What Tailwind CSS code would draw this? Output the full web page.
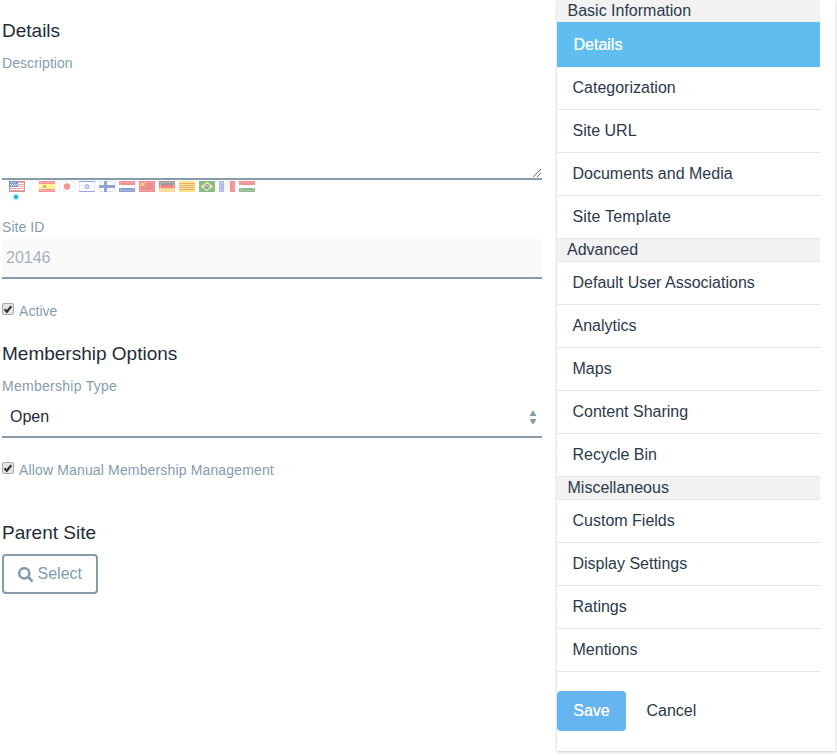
<!DOCTYPE html>
<html lang="en">
<head>
<meta charset="utf-8">
<title>Site Settings</title>
<script src="https://cdn.jsdelivr.net/npm/@tailwindcss/browser@4"></script>
</head>
<body class="bg-white">
<div class="flex h-[756px] w-[837px] overflow-hidden font-['Liberation_Sans',Arial,sans-serif] text-base text-[#2b3a4a]">
  <main class="ml-[2px] w-[540px] shrink-0 pt-[19px] text-[14px] tracking-[0.15px] text-[#869cad]">
    <h2 class="h-[24px] text-[19px] leading-[24px] tracking-normal text-[#1f2c38]">Details</h2>
    <label class="mt-[10px] block h-[20px] leading-[20px] tracking-[0.06px]">Description</label>
    <div class="flex h-[107px] items-end justify-end border-b-2 border-[#869cad]">
      <svg class="mb-px mr-px h-[8px] w-[8px]" viewBox="0 0 8 8" shape-rendering="crispEdges" fill="#666"><path d="M0 7h1v1H0zM1 6h1v1H1zM2 5h1v1H2zM3 4h1v1H3zM4 3h1v1H4zM5 2h1v1H5zM6 1h1v1H6zM7 0h1v1H7zM4 7h1v1H4zM5 6h1v1H5zM6 5h1v1H6zM7 4h1v1H7z"/></svg>
    </div>
    <div class="mt-px flex h-[21px] pl-[7px]">
      <div class="mr-[14px] flex w-[16px] flex-col">
        <svg class="h-[11px] w-[16px] shrink-0" viewBox="0 0 16 11"><rect width="16" height="11" fill="#f3a0a0"/><path d="M1 2h14v1H1zM1 4h14v1H1zM1 6h14v1H1zM1 8h14v1H1z" fill="#fff"/><path d="M0 0h9v6H0z" fill="#7d9dd5"/><path d="M2 1h1v1H2zM4 1h1v1H4zM6 1h1v1H6zM1 3h1v1H1zM3 3h1v1H3zM5 3h1v1H5zM7 3h1v1H7zM2 4h1v1H2zM4 4h1v1H4zM6 4h1v1H6z" fill="#dce6f6"/><path d="M.5.5h15v10H.5z" fill="none" stroke="#8b7e9e" stroke-opacity=".35"/></svg>
        <span class="ml-[5px] mt-[3px] h-[4px] w-[4px] shrink-0 rounded-full bg-[#13b0e4] shadow-[0_0_2px_1px_#9ee4fa]"></span>
      </div>
      <div class="flex gap-[4px] opacity-90">
        <svg class="h-[11px] w-[16px]" viewBox="0 0 16 11"><path d="M0 0h16v11H0z" fill="#f98585"/><path d="M0 3h16v5H0z" fill="#fff485"/><path d="M4 4h3v3H4z" fill="#f3a37a"/><path d="M5 5h1v1H5z" fill="#d46d6d"/><path d="M1.500 1.500h13v8h-13z" fill="none" stroke="#fff" stroke-opacity=".3"/></svg>
        <svg class="h-[11px] w-[16px]" viewBox="0 0 16 11"><path d="M.5.5h15v10H.5z" fill="#fdfdfd" stroke="#f1f1f1"/><circle cx="8" cy="5.500" r="3.200" fill="#fa8b8b"/></svg>
        <svg class="h-[11px] w-[16px]" viewBox="0 0 16 11"><path d="M.5.5h15v10H.5z" fill="#fcfcff" stroke="#e2e6f7"/><path d="M0 0h16v1H0zM0 10h16v1H0z" fill="#8e9be5"/><path d="M8 3l2.300 4H5.700zM8 8L5.700 4h4.600z" fill="none" stroke="#a0aee9" stroke-width=".9"/></svg>
        <svg class="h-[11px] w-[16px]" viewBox="0 0 16 11"><path d="M.5.5h15v10H.5z" fill="#fbfbfd" stroke="#e2e6ef"/><path d="M0 4h16v3H0zM5 0h3v11H5z" fill="#849dcc"/></svg>
        <svg class="h-[11px] w-[16px]" viewBox="0 0 16 11"><path d="M0 0h16v4H0z" fill="#ee8585"/><path d="M0 4h16v3H0z" fill="#fff"/><path d="M0 7h16v4H0z" fill="#8196c9"/><path d="M1.500 1.500h13v8h-13z" fill="none" stroke="#fff" stroke-opacity=".25"/></svg>
        <svg class="h-[11px] w-[16px]" viewBox="0 0 16 11"><path d="M0 0h16v11H0z" fill="#ec8080"/><path d="M2 2h3v3H2zM5 1h1v1H5zM6 2h1v2H6zM5 5h1v1H5z" fill="#f8c675"/><path d="M1.500 1.500h13v8h-13z" fill="none" stroke="#fff" stroke-opacity=".22"/></svg>
        <svg class="h-[11px] w-[16px]" viewBox="0 0 16 11"><path d="M0 0h16v4H0z" fill="#8e8e8e"/><path d="M0 4h16v3H0z" fill="#ef7777"/><path d="M0 7h16v4H0z" fill="#f3d28b"/><path d="M1.500 1.500h13v8h-13z" fill="none" stroke="#fff" stroke-opacity=".3"/></svg>
        <svg class="h-[11px] w-[16px]" viewBox="0 0 16 11"><path d="M0 0h16v11H0z" fill="#fbe677"/><path d="M0 2h16v1H0zM0 4h16v1H0zM0 6h16v1H0zM0 8h16v1H0z" fill="#ef9f72"/></svg>
        <svg class="h-[11px] w-[16px]" viewBox="0 0 16 11"><path d="M0 0h16v11H0z" fill="#7eb37e"/><path d="M8 1l6.500 4.500L8 10 1.500 5.500z" fill="#f3f077"/><circle cx="8" cy="5.500" r="2.600" fill="#7391ce"/><path d="M6 4.500q2.500 0 4 2" fill="none" stroke="#e8f0fa" stroke-width=".8"/></svg>
        <svg class="h-[11px] w-[16px]" viewBox="0 0 16 11"><path d="M0 0h5v11H0z" fill="#a3b4df"/><path d="M5 0h6v11H5z" fill="#f4f4f6"/><path d="M11 0h5v11h-5z" fill="#f68484"/><path d="M1.500 1.500h13v8h-13z" fill="none" stroke="#fff" stroke-opacity=".25"/></svg>
        <svg class="h-[11px] w-[16px]" viewBox="0 0 16 11"><path d="M0 0h16v4H0z" fill="#ec8484"/><path d="M0 4h16v3H0z" fill="#fff"/><path d="M0 7h16v4H0z" fill="#7fb488"/><path d="M1.500 1.500h13v8h-13z" fill="none" stroke="#fff" stroke-opacity=".22"/></svg>
      </div>
    </div>
    <label class="mt-[15px] block h-[20px] leading-[20px] tracking-[0.05px]">Site ID</label>
    <div class="mt-[2px] h-[40px] border-b-2 border-[#869cad] bg-[#fafafa] pl-[4px] text-base leading-[37px] tracking-normal text-[#a5b1bc]">20146</div>
    <div class="mt-[22px] flex h-[20px] items-start leading-[20px] tracking-[0.05px]">
      <svg class="mr-[5px] mt-[2px] h-[12px] w-[12px]" viewBox="0 0 12 12"><rect x=".5" y=".5" width="11" height="11" rx="1.500" fill="#e7e7e7" stroke="#a9a9a9"/><path d="M2.500 6.300l2.300 2.500L9.300 3.300" fill="none" stroke="#333" stroke-width="2.200"/></svg>
      Active
    </div>
    <h2 class="mt-[21px] h-[24px] text-[19px] leading-[24px] tracking-normal text-[#1f2c38]">Membership Options</h2>
    <label class="mt-[10px] block h-[20px] leading-[20px] tracking-[0.27px]">Membership Type</label>
    <div class="flex h-[42px] justify-between border-b-2 border-[#869cad] pl-[8px] pr-[6px] text-base leading-[41px] tracking-normal text-[#1f2c38]">
      <span>Open</span>
      <svg class="mt-[15px] h-[13px] w-[6px]" viewBox="0 0 6 13" fill="#869cad"><path d="M2.500 0h1L6 4v1H0V4zM2.500 13h1L6 9V8H0v1z"/></svg>
    </div>
    <div class="mt-[22px] flex h-[20px] items-start leading-[20px]">
      <svg class="mr-[5px] mt-[2px] h-[12px] w-[12px]" viewBox="0 0 12 12"><rect x=".5" y=".5" width="11" height="11" rx="1.500" fill="#e7e7e7" stroke="#a9a9a9"/><path d="M2.500 6.300l2.300 2.500L9.300 3.300" fill="none" stroke="#333" stroke-width="2.200"/></svg>
      Allow Manual Membership Management
    </div>
    <h2 class="mt-[41px] h-[24px] text-[19px] leading-[24px] tracking-normal text-[#1f2c38]">Parent Site</h2>
    <button class="mt-[9px] flex h-[40px] w-[96px] items-center rounded-[4px] border-2 border-[#869cad] pl-[14px] text-base tracking-normal">
      <svg class="mr-[4.5px] h-[15px] w-[15px] shrink-0" viewBox="0 0 15 15" fill="none" stroke="#869cad"><circle cx="6.300" cy="6.300" r="5.100" stroke-width="2.500"/><path d="M10 10l3.600 3.600" stroke-width="2.800" stroke-linecap="round"/></svg>
      <span>Select</span>
    </button>
  </main>
  <aside class="ml-[15px] h-[751px] w-[278px] shrink-0 shadow-[0_1px_3px_rgba(0,0,0,0.22)]">
    <nav class="w-[263px] leading-[42px]">
      <h3 class="h-[22px] bg-[#f2f2f2] pl-[10.5px] leading-[21px]">Basic Information</h3>
      <a class="block h-[45px] bg-[#60bdf0] pl-[16.5px] leading-[45px] text-white [text-shadow:0_0_0.5px_white]">Details</a>
      <a class="block h-[43px] border-b border-[#e3e6e9] pl-[15.500px]">Categorization</a>
      <a class="block h-[43px] border-b border-[#e3e6e9] pl-[15.500px]">Site URL</a>
      <a class="block h-[43px] border-b border-[#e3e6e9] pl-[15.500px]">Documents and Media</a>
      <a class="block h-[43px] border-b border-[#e3e6e9] pl-[15.500px] tracking-[0.15px]">Site Template</a>
      <h3 class="h-[23px] border-b border-[#e3e6e9] bg-[#f2f2f2] pl-[10px] leading-[22px]">Advanced</h3>
      <a class="block h-[43px] border-b border-[#e3e6e9] pl-[15.500px]">Default User Associations</a>
      <a class="block h-[43px] border-b border-[#e3e6e9] pl-[15.500px]">Analytics</a>
      <a class="block h-[43px] border-b border-[#e3e6e9] pl-[15.500px]">Maps</a>
      <a class="block h-[43px] border-b border-[#e3e6e9] pl-[15.500px]">Content Sharing</a>
      <a class="block h-[43px] border-b border-[#e3e6e9] pl-[15.500px]">Recycle Bin</a>
      <h3 class="h-[23px] border-b border-[#e3e6e9] bg-[#f2f2f2] pl-[10.5px] leading-[22px]">Miscellaneous</h3>
      <a class="block h-[43px] border-b border-[#e3e6e9] pl-[15.500px]">Custom Fields</a>
      <a class="block h-[43px] border-b border-[#e3e6e9] pl-[15.500px]">Display Settings</a>
      <a class="block h-[43px] border-b border-[#e3e6e9] pl-[15.500px]">Ratings</a>
      <a class="block h-[43px] border-b border-[#e3e6e9] pl-[15.500px]">Mentions</a>
    </nav>
    <div class="mt-[19px] flex h-[40px] leading-[38px]">
      <button class="w-[69px] rounded-[4px] bg-[#65b5f0] text-white [text-shadow:0_0_0.5px_white]">Save</button>
      <button class="ml-[20.5px]">Cancel</button>
    </div>
  </aside>
</div>
</body>
</html>
